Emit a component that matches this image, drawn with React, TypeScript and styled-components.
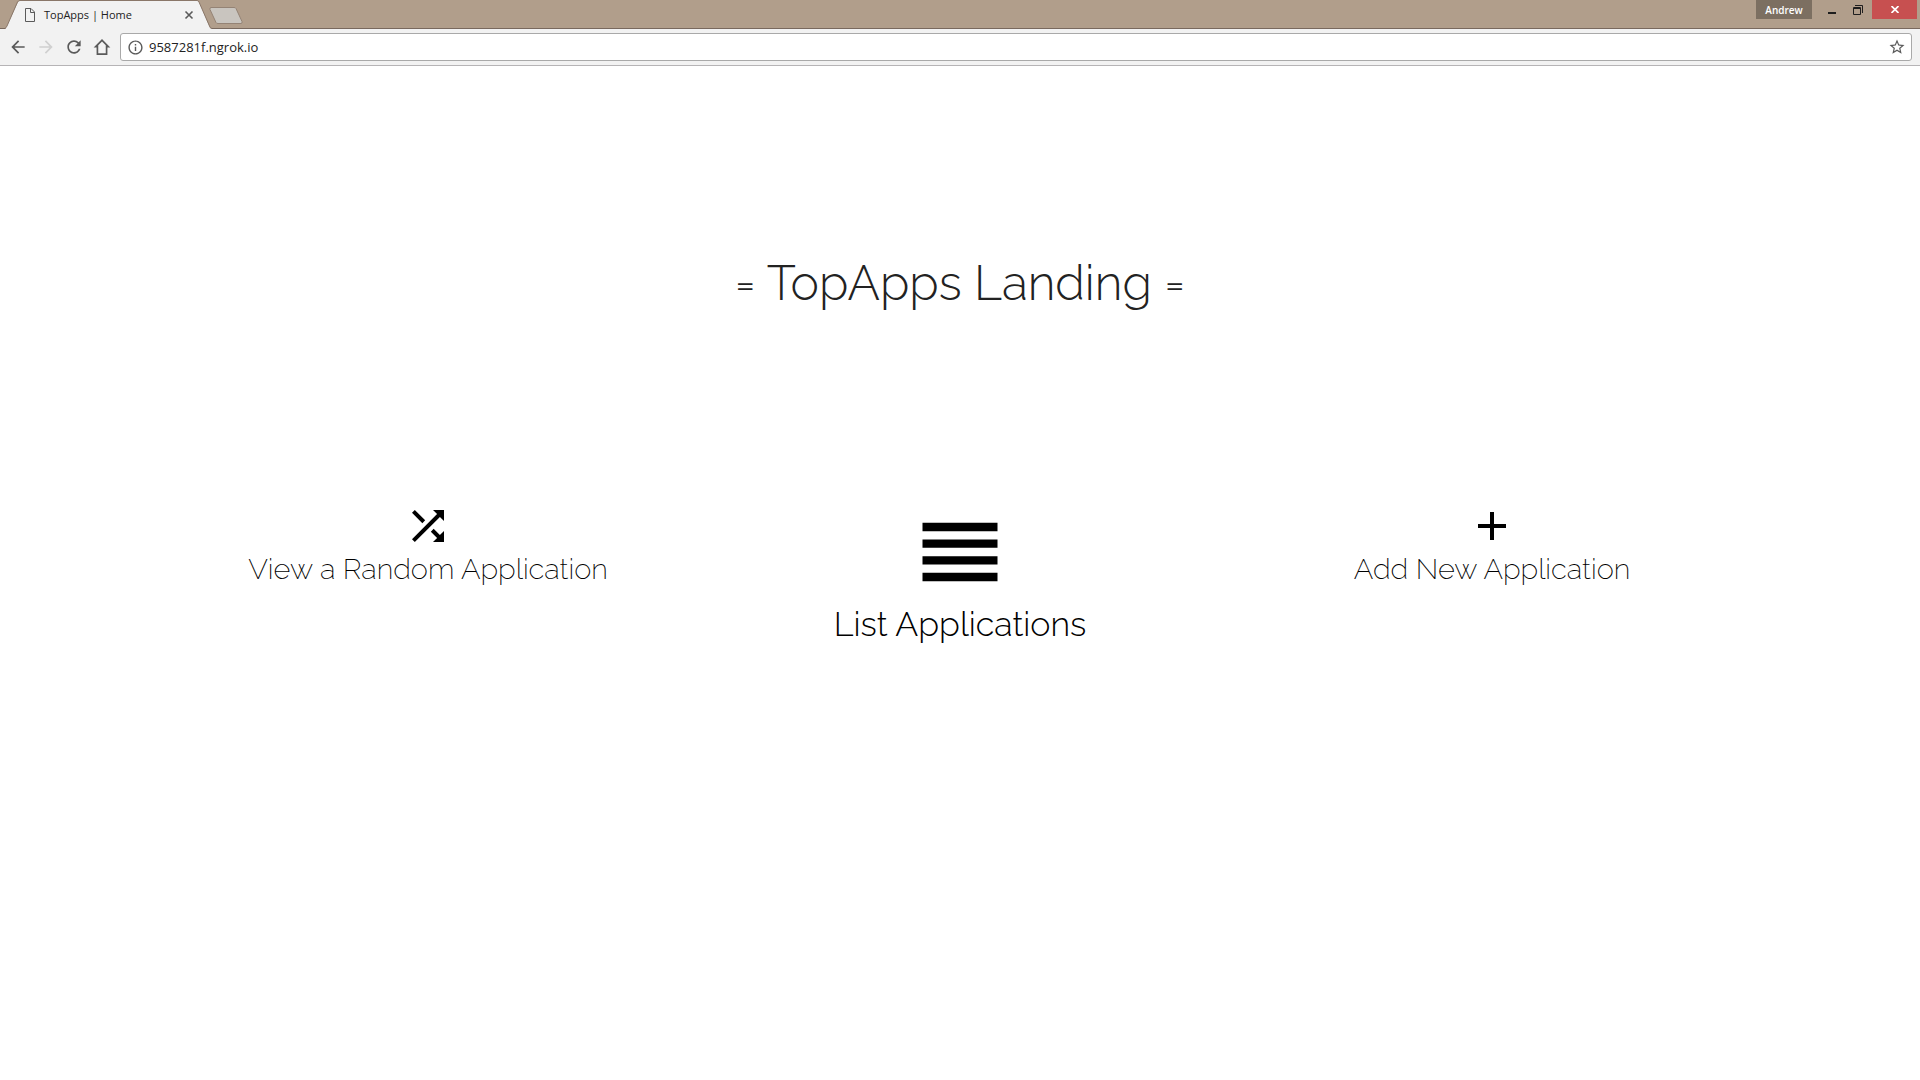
import React from 'react';
import styled, { createGlobalStyle } from 'styled-components';

const GlobalStyle = createGlobalStyle`
  * { box-sizing: border-box; }
  html, body { margin: 0; background: #fff; }
  button, input { font: inherit; color: inherit; border: 0; padding: 0; background: none; }
  svg { display: block; }
`;

const Window = styled.div`
  min-height: 100vh;
  display: flex;
  flex-direction: column;
  font-family: "Open Sans", "Noto Sans", sans-serif;
  color: #222;
`;

const TabStrip = styled.div`
  display: flex;
  align-items: flex-start;
  height: 29px;
  padding: 0 3px 0 5px;
  background: #b19e8b;
  box-shadow: inset 0 -1px #79695e;
`;

const Tab = styled.div`
  position: relative;
  display: flex;
  align-items: center;
  width: 207px;
  height: 29px;
  padding: 1px 18px 0 20px;
  font-size: 11px;
`;

const TabShape = styled.svg`
  position: absolute;
  inset: 0;
`;

const TabTitle = styled.span`
  position: relative;
  flex: 1;
  margin-left: 9px;
  line-height: 16px;
  white-space: nowrap;
`;

const TabIcon = styled.svg`
  position: relative;
`;

const TabClose = styled.button`
  position: relative;
  width: 10px;
  height: 10px;
`;

const NewTab = styled.button`
  margin: 7px 0 0 -3px;
`;

const WindowControls = styled.div`
  display: flex;
  margin-left: auto;
  height: 19px;
`;

const Profile = styled.button`
  && {
    width: 56px;
    background: #7c6f61;
    color: #fff;
    font-size: 10px;
    line-height: 16px;
    font-weight: 600;
  }
`;

const Control = styled.button<{ $w: number; $danger?: boolean }>`
  && {
    display: flex;
    align-items: center;
    justify-content: center;
    width: ${p => p.$w}px;
    background: ${p => (p.$danger ? '#c75050' : 'transparent')};
  }
`;

const Toolbar = styled.div`
  display: flex;
  align-items: center;
  height: 37px;
  padding: 0 8px 0 4px;
  background: #f2f2f2;
  border-bottom: 1px solid #b6b4b6;
`;

const NavButton = styled.button<{ $off?: boolean }>`
  && {
    display: flex;
    align-items: center;
    justify-content: center;
    width: 28px;
    height: 28px;
    color: ${p => (p.$off ? '#d0d0d0' : '#5a5a5a')};
  }
`;

const AddressBar = styled.label`
  flex: 1;
  display: flex;
  align-items: center;
  gap: 5px;
  height: 28px;
  margin-left: 4px;
  padding: 0 5px 0 6px;
  background: #fff;
  border: 1px solid #a9a9a9;
  border-radius: 3px;
  color: #5a5a5a;
`;

const Address = styled.input`
  && {
    flex: 1;
    min-width: 0;
    height: 20px;
    font-size: 13px;
    color: #222;
    outline: 0;
  }
`;

const Page = styled.main`
  flex: 1;
  font-family: Raleway, Inter, "Open Sans", sans-serif;
  font-weight: 200;
`;

const Title = styled.h1`
  margin: 0;
  padding-top: 185px;
  text-align: center;
  font-size: 48px;
  line-height: 64px;
  font-weight: 300;
`;

const Actions = styled.nav`
  display: grid;
  grid-template-columns: repeat(3, 1fr);
  align-items: start;
  max-width: 1596px;
  margin: 187px auto 0;
`;

const Action = styled.a<{ $large?: boolean }>`
  display: flex;
  flex-direction: column;
  align-items: center;
  justify-self: center;
  color: #000;
  text-decoration: none;
  font-size: ${p => (p.$large ? 34 : 29)}px;
  font-weight: ${p => (p.$large ? 300 : 200)};
  line-height: ${p => (p.$large ? 44 : 39)}px;
`;

function Glyph({ d, size = 20 }: { d: string; size?: number }) {
  return (
    <svg width={size} height={size} viewBox="0 0 24 24" fill="currentColor" aria-hidden="true">
      <path d={d} />
    </svg>
  );
}

const glyphs = {
  back: 'M20 11H7.83l5.59-5.59L12 4l-8 8 8 8 1.41-1.41L7.83 13H20v-2z',
  forward: 'M12 4l-1.41 1.41L16.17 11H4v2h12.17l-5.58 5.59L12 20l8-8z',
  reload:
    'M17.65 6.35C16.2 4.9 14.21 4 12 4c-4.42 0-7.99 3.58-7.99 8s3.57 8 7.99 8c3.73 0 6.84-2.55 7.73-6h-2.08c-.82 2.33-3.04 4-5.65 4-3.31 0-6-2.69-6-6s2.69-6 6-6c1.66 0 3.14.69 4.22 1.78L13 11h7V4l-2.35 2.35z',
  home: 'M12 2.500L2 12.500H5.500V21.500h13v-9h3.500L12 2.500zm0 3l4.500 4.500V19.500H7.500v-9.500L12 5.500z',
  info: 'M11 17h2v-6h-2v6zm1-15C6.480 2 2 6.480 2 12s4.480 10 10 10 10-4.480 10-10S17.520 2 12 2zm0 18c-4.410 0-8-3.590-8-8s3.590-8 8-8 8 3.590 8 8-3.590 8-8 8zM11 9h2V7h-2v2z',
  star: 'M22 9.240l-7.190-.62L12 2 9.190 8.630 2 9.240l5.460 4.730L5.820 21 12 17.270 18.180 21l-1.630-7.030L22 9.240zM12 15.400l-3.760 2.270 1-4.280-3.320-2.880 4.380-.38L12 6.100l1.710 4.040 4.380.38-3.320 2.880 1 4.280L12 15.400z',
  shuffle:
    'M10.590 9.170L5.410 4 4 5.410l5.170 5.170 1.420-1.410zM14.500 4l2.040 2.040L4 18.590 5.410 20 17.960 7.460 20 9.500V4h-5.500zm.33 9.410l-1.410 1.410 3.130 3.130L14.500 20H20v-5.500l-2.040 2.040-3.130-3.130z',
  list: 'M3 15h18v-2H3v2zm0 4h18v-2H3v2zm0-8h18V9H3v2zm0-6v2h18V5H3z',
  add: 'M19 13h-6v6h-2v-6H5v-2h6V5h2v6h6v2z',
};

export default function App() {
  return (
    <Window>
      <GlobalStyle />
      <TabStrip>
        <Tab>
          <TabShape width="207" height="29" viewBox="0 0 207 29" aria-hidden="true">
            <path d="M0 29L1 28L13 2Q14 .5 15 .5H192Q193.500 .5 194 2L205 28L207 29Z" fill="#f2f2f2" />
            <path d="M0 28.500Q1 28 2 26L12.500 2Q13.500 .5 15 .5H192Q193.500 .5 194 2L204.500 26Q205 28 207 28.500" fill="none" stroke="#8a7769" />
          </TabShape>
          <TabIcon width="10" height="14" viewBox="0 0 10 14" fill="none" stroke="#5a5a5a" aria-hidden="true">
            <path d="M.5 .5H6L9.500 4V13.500H.5ZM5.500 .5V4.500H9.500" />
          </TabIcon>
          <TabTitle>TopApps | Home</TabTitle>
          <TabClose aria-label="Close tab">
            <svg width="10" height="10" viewBox="0 0 10 10" stroke="#5a5a5a" strokeWidth="1.6" aria-hidden="true">
              <path d="M1.500 1.500l7 7M8.500 1.500l-7 7" />
            </svg>
          </TabClose>
        </Tab>
        <NewTab aria-label="New tab">
          <svg width="34" height="17" viewBox="0 0 34 17" aria-hidden="true">
            <path d="M2 .5H25Q26.500 .5 27 1.500L33 14.500Q33.500 16.500 32 16.500H9Q7.500 16.500 7 15.500L1 2.500Q.5 .5 2 .5Z" fill="#c9c5bf" stroke="#948375" />
          </svg>
        </NewTab>
        <WindowControls>
          <Profile>Andrew</Profile>
          <Control $w={34} aria-label="Minimize">
            <svg width="18" height="18" viewBox="0 0 18 18" aria-hidden="true"><path d="M8 11h8v2H8z" fill="#1e1e1e" /></svg>
          </Control>
          <Control $w={26} aria-label="Restore">
            <svg width="12" height="12" viewBox="0 0 12 12" fill="none" stroke="#1e1e1e" aria-hidden="true">
              <path d="M.5 3.500h7v7h-7zM.5 4.500h7M2 1.500h7.500V9" />
            </svg>
          </Control>
          <Control $w={45} $danger aria-label="Close">
            <svg width="8" height="7" viewBox="0 0 8 7" stroke="#fff" strokeWidth="1.7" aria-hidden="true">
              <path d="M.5 0l7 7M7.500 0l-7 7" />
            </svg>
          </Control>
        </WindowControls>
      </TabStrip>
      <Toolbar>
        <NavButton aria-label="Back"><Glyph d={glyphs.back} /></NavButton>
        <NavButton $off disabled aria-label="Forward"><Glyph d={glyphs.forward} /></NavButton>
        <NavButton aria-label="Reload"><Glyph d={glyphs.reload} /></NavButton>
        <NavButton aria-label="Home"><Glyph d={glyphs.home} /></NavButton>
        <AddressBar>
          <Glyph d={glyphs.info} size={17} />
          <Address aria-label="Address" defaultValue="9587281f.ngrok.io" spellCheck={false} />
          <Glyph d={glyphs.star} size={18} />
        </AddressBar>
      </Toolbar>
      <Page>
        <Title>= TopApps Landing =</Title>
        <Actions>
          <Action href="#random">
            <Glyph d={glyphs.shuffle} size={48} />
            View a Random Application
          </Action>
          <Action href="#list" $large>
            <Glyph d={glyphs.list} size={100} />
            List Applications
          </Action>
          <Action href="#new">
            <Glyph d={glyphs.add} size={48} />
            Add New Application
          </Action>
        </Actions>
      </Page>
    </Window>
  );
}
